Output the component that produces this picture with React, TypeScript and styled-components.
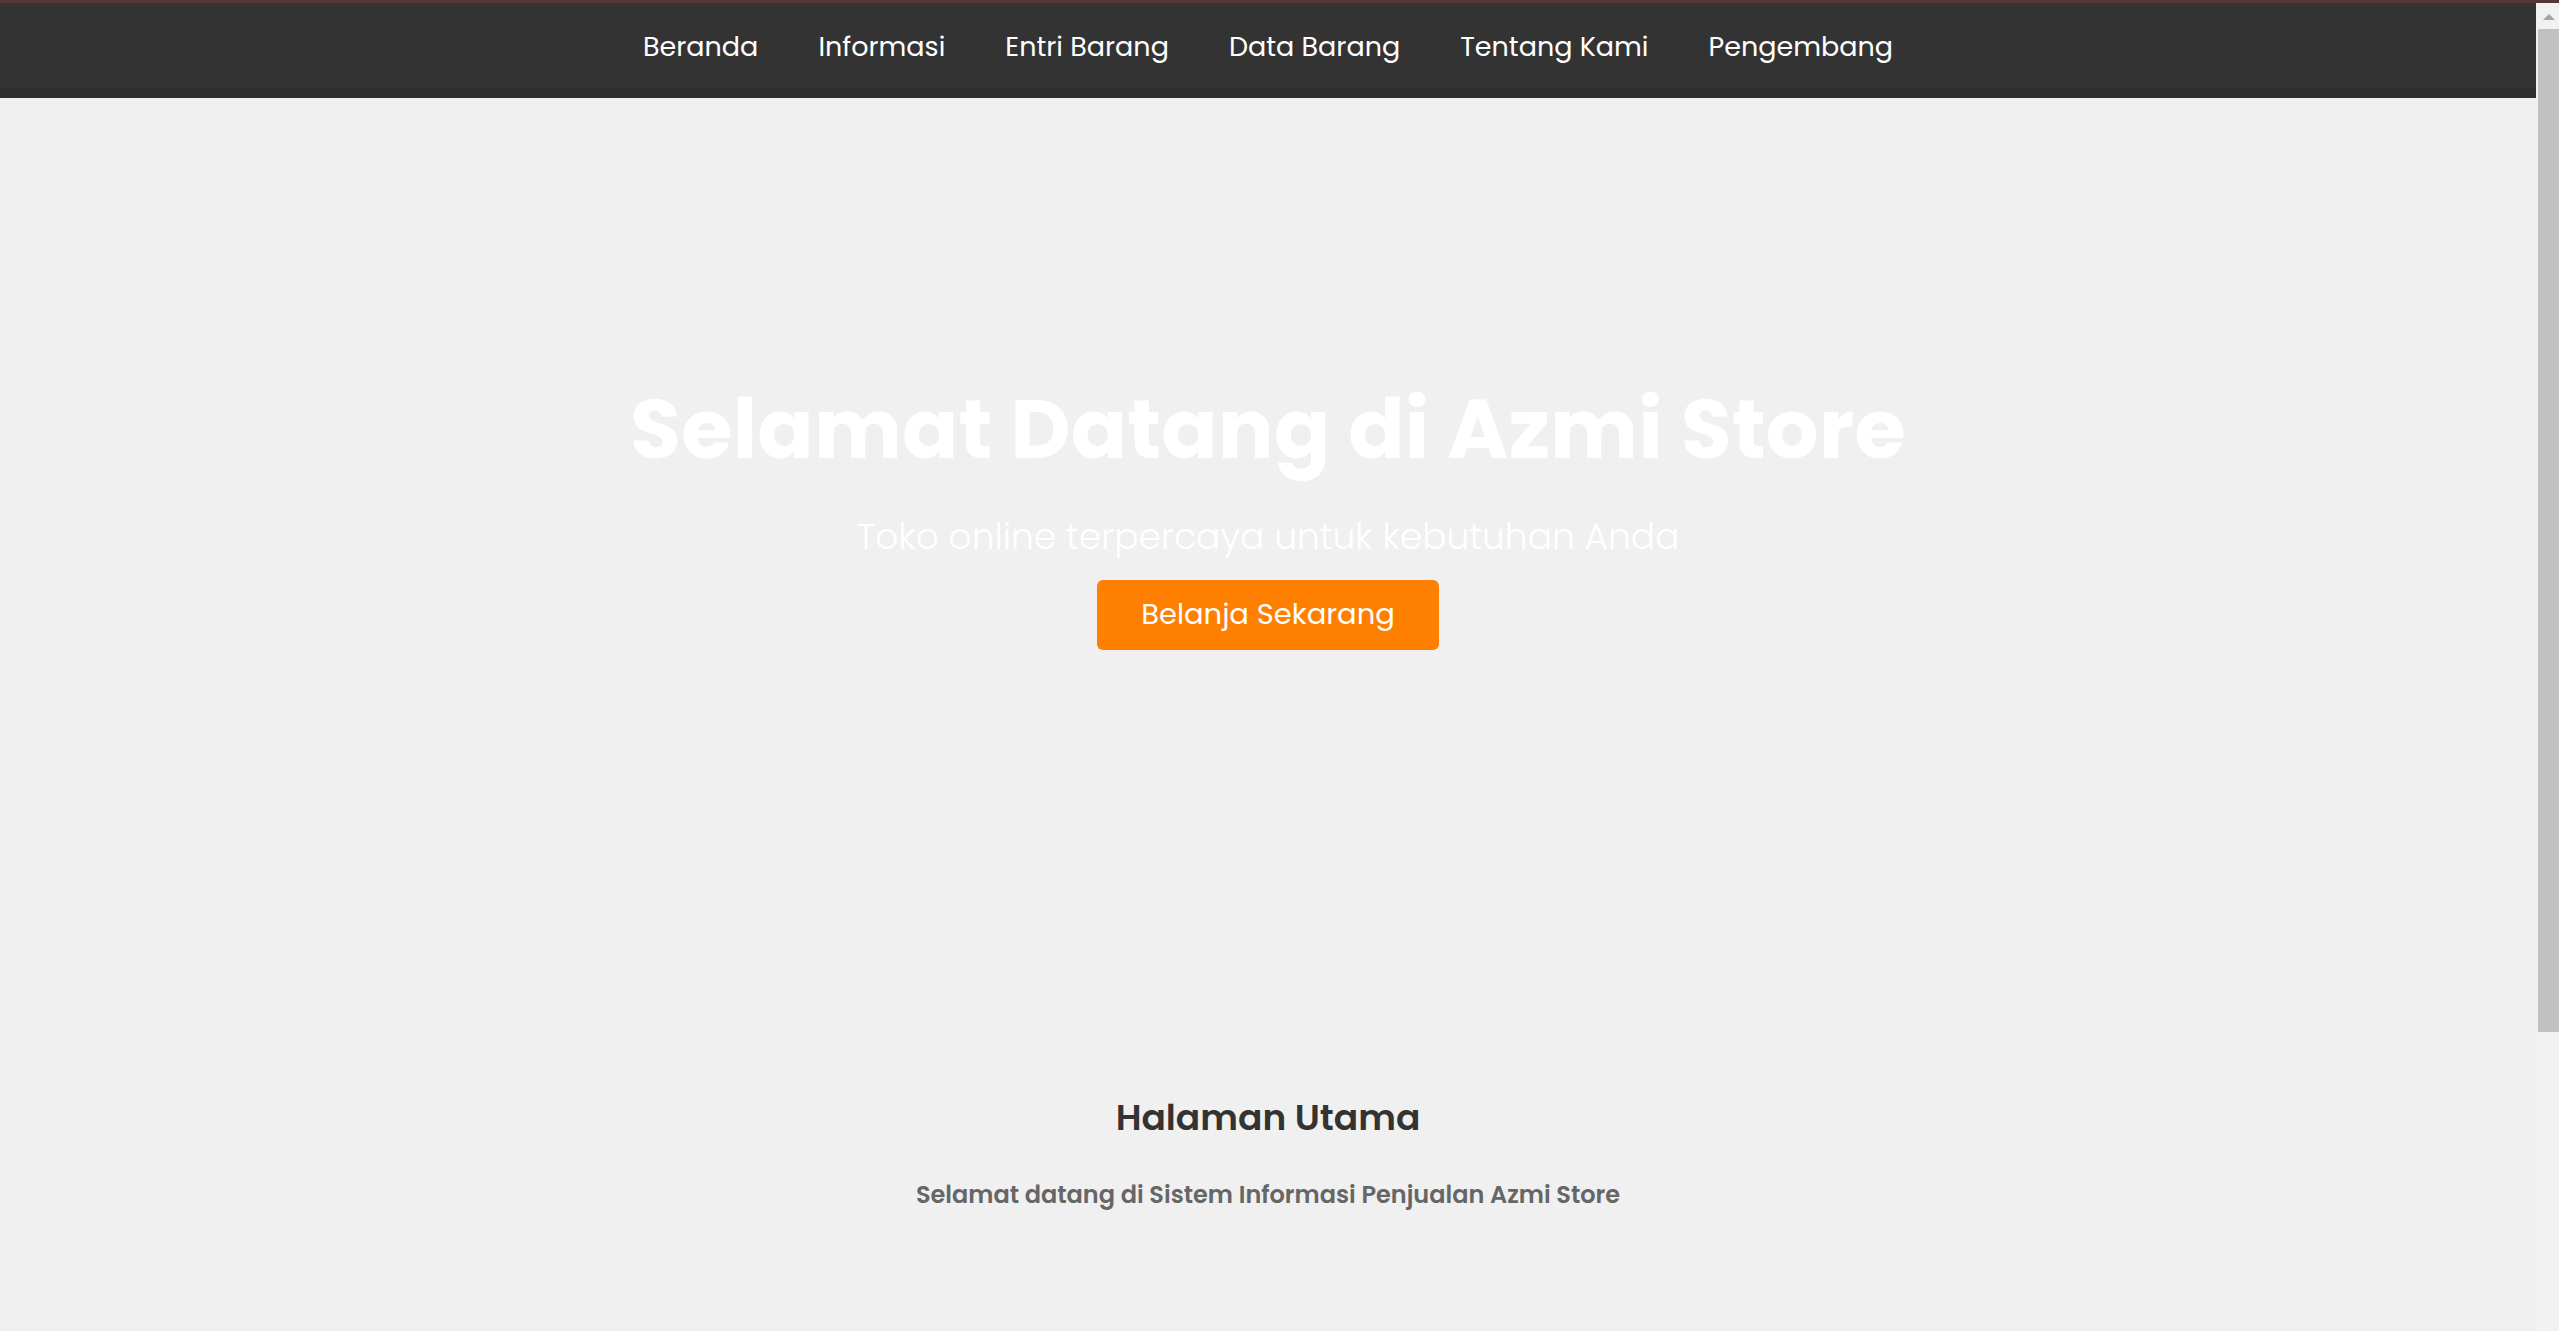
import React from "react";
import styled, { createGlobalStyle } from "styled-components";

const GlobalStyle = createGlobalStyle`
  html, body {
    margin: 0;
    padding: 0;
    background: #f0f0f0;
  }
  body {
    padding-right: 23px;
    font-family: "Poppins", "Inter", "Noto Sans", sans-serif;
    -webkit-font-smoothing: antialiased;
  }
  * { box-sizing: border-box; }
`;

const Page = styled.div`
  min-height: 100vh;
  background: #f0f0f0;
`;

/* decorative window scrollbar, drawn over the right edge as in the screenshot */
const ScrollTrack = styled.aside`
  position: fixed;
  top: 0;
  right: 0;
  width: 23px;
  height: 100vh;
  background: #f1f1f1;
  border-top: 3px solid #553535;
  display: flex;
  flex-direction: column;
  z-index: 10;
`;

const ScrollArrow = styled.div`
  height: 26px;
  display: flex;
  justify-content: center;
  padding-top: 11px;
  padding-left: 2px;
`;

const ArrowUp = styled.span`
  width: 0;
  height: 0;
  border-left: 6px solid transparent;
  border-right: 6px solid transparent;
  border-bottom: 6px solid #a3a3a3;
`;

const ScrollThumb = styled.div`
  margin-left: 2px;
  height: 1003px;
  background: #c1c1c1;
`;

const NavBar = styled.nav`
  height: 98px;
  background: #333333;
  border-top: 3px solid #553535;
  border-bottom: 10px solid #2e2e2e;
  padding-top: 3px;
  display: flex;
  justify-content: center;
  align-items: center;
`;

const NavList = styled.ul`
  list-style: none;
  margin: 0;
  padding: 0;
  display: flex;
  gap: 60px;
`;

const NavLink = styled.a`
  color: #ffffff;
  text-decoration: none;
  font-size: 27px;
  font-weight: 400;
  line-height: 1.2;
  cursor: pointer;
`;

const Hero = styled.header`
  min-height: 854px;
  padding-top: 282px;
  display: flex;
  flex-direction: column;
  align-items: center;
  text-align: center;
`;

const HeroTitle = styled.h1`
  margin: 0;
  color: #ffffff;
  font-size: 83px;
  font-weight: 700;
  line-height: 1.2;
  letter-spacing: 0.2px;
`;

const HeroSubtitle = styled.p`
  margin: 35px 0 0;
  color: #ffffff;
  font-size: 36px;
  font-weight: 300;
  line-height: 1.2;
`;

const ShopButton = styled.button`
  margin-top: 22px;
  width: 342px;
  height: 70px;
  border: none;
  border-radius: 6px;
  background: #ff8000;
  color: #ffffff;
  font-family: inherit;
  font-size: 29px;
  font-weight: 400;
  display: flex;
  align-items: center;
  justify-content: center;
  cursor: pointer;
`;

const Section = styled.section`
  padding: 144px 20px 480px;
  text-align: center;
`;

const SectionTitle = styled.h2`
  margin: 0;
  color: #333333;
  font-size: 36px;
  font-weight: 600;
  line-height: 1.2;
`;

const SectionText = styled.p`
  margin: 38px 0 0;
  color: #666666;
  font-size: 24px;
  font-weight: 600;
  line-height: 1.5;
`;

const links = ["Beranda", "Informasi", "Entri Barang", "Data Barang", "Tentang Kami", "Pengembang"];

export default function App() {
  return (
    <>
      <GlobalStyle />
      <Page>
        <NavBar>
          <NavList>
            {links.map((l) => (
              <li key={l}>
                <NavLink href="#">{l}</NavLink>
              </li>
            ))}
          </NavList>
        </NavBar>
        <Hero>
          <HeroTitle>Selamat Datang di Azmi Store</HeroTitle>
          <HeroSubtitle>Toko online terpercaya untuk kebutuhan Anda</HeroSubtitle>
          <ShopButton>Belanja Sekarang</ShopButton>
        </Hero>
        <Section>
          <SectionTitle>Halaman Utama</SectionTitle>
          <SectionText>Selamat datang di Sistem Informasi Penjualan Azmi Store</SectionText>
        </Section>
      </Page>
      <ScrollTrack aria-hidden="true">
        <ScrollArrow>
          <ArrowUp />
        </ScrollArrow>
        <ScrollThumb />
      </ScrollTrack>
    </>
  );
}
